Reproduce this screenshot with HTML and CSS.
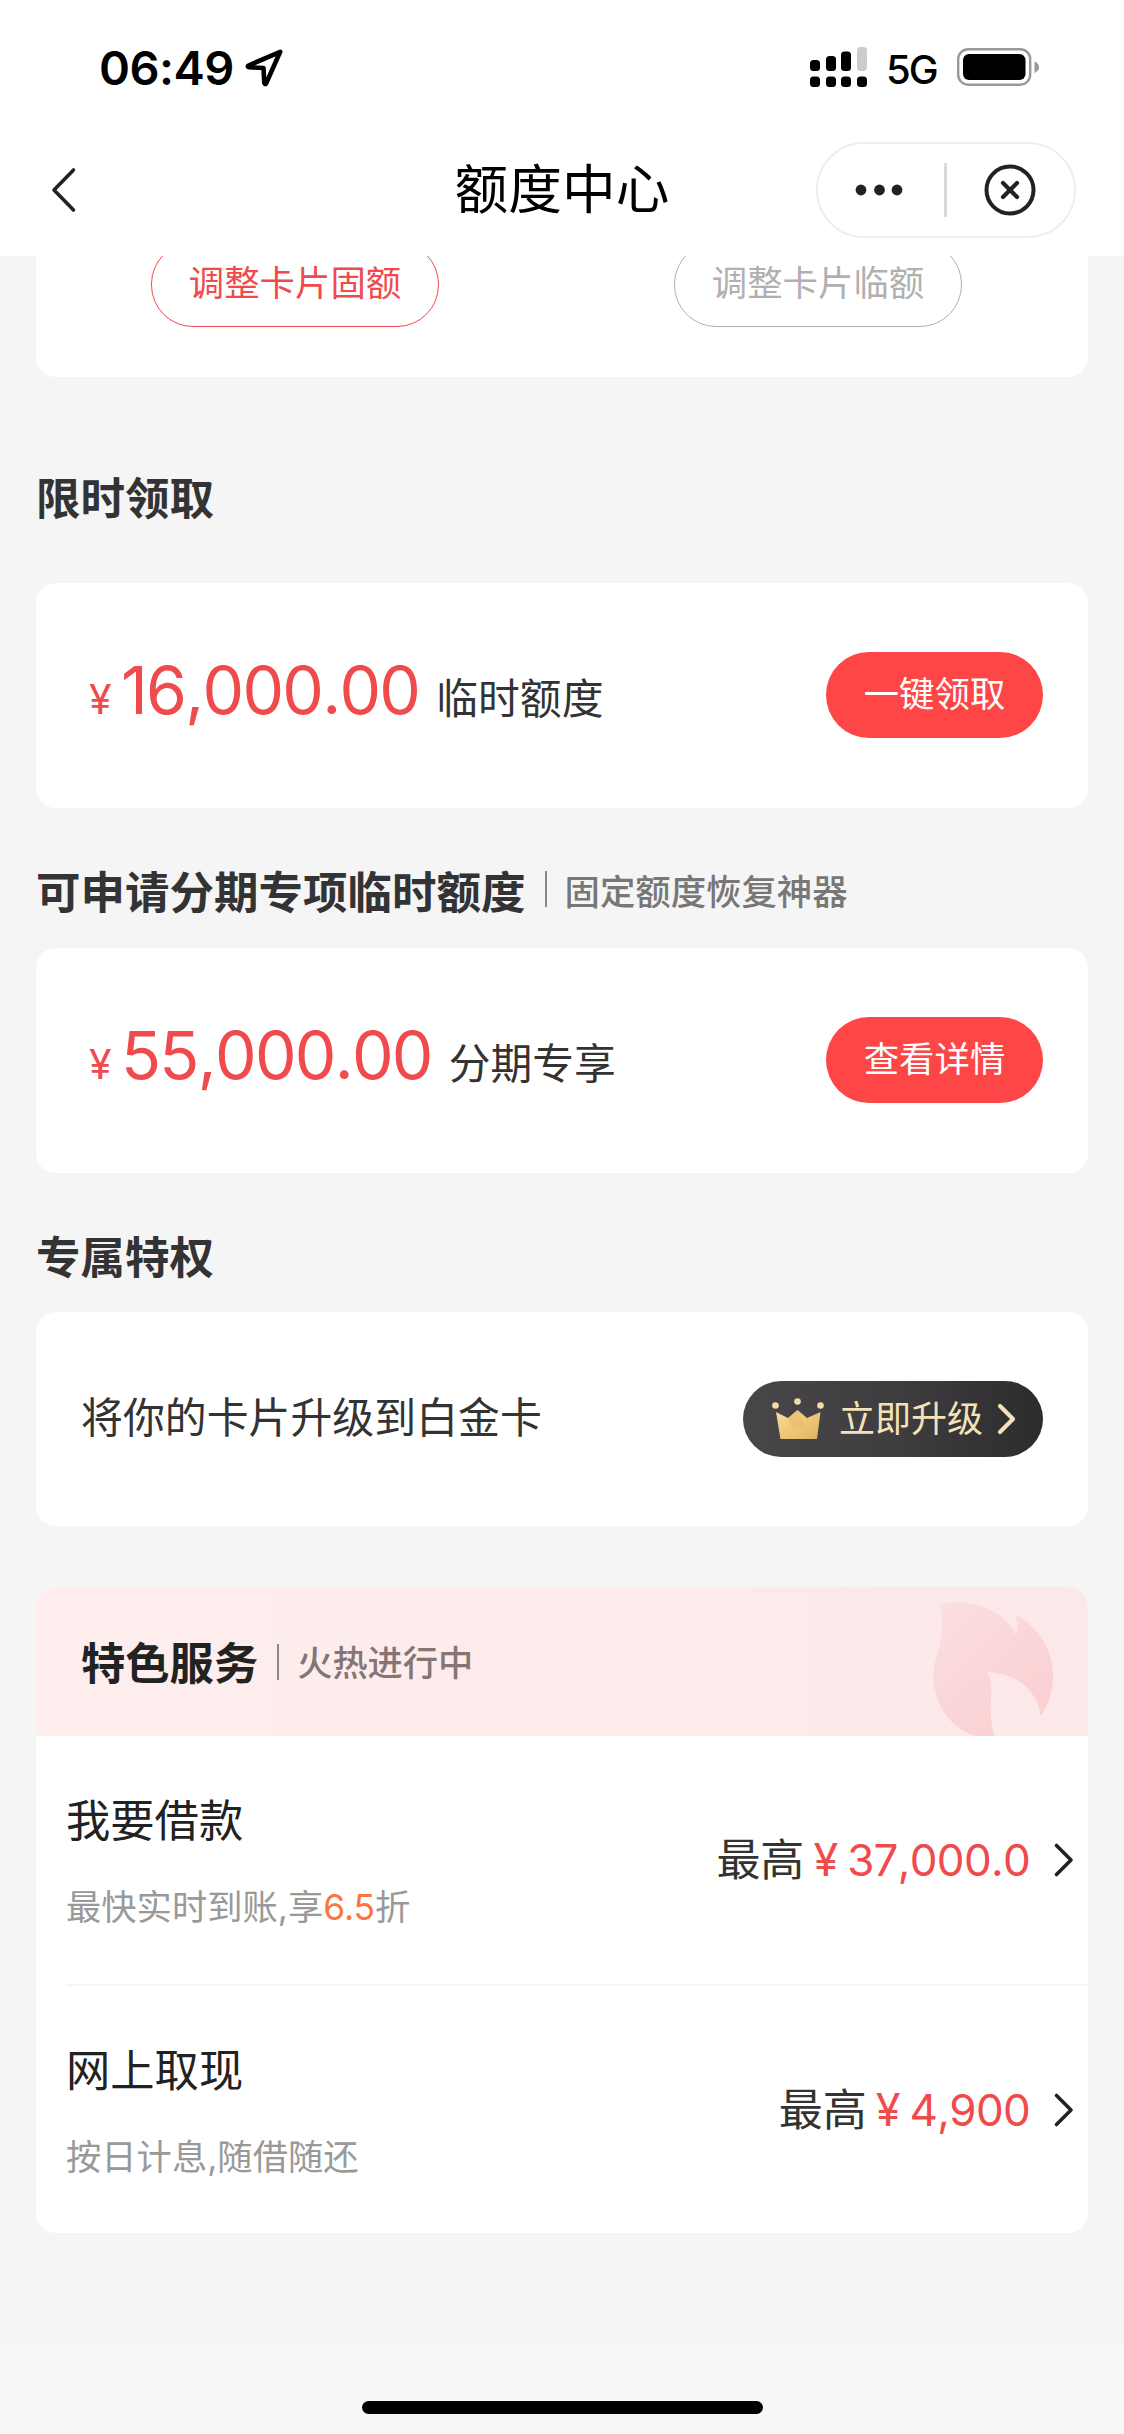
FILE: index.html
```html
<!DOCTYPE html>
<html lang="zh-CN">
<head>
<meta charset="utf-8">
<meta name="viewport" content="width=device-width">
<title>额度中心</title>
<link rel="stylesheet" href="styles.css">
</head>
<body>
<header class="top">
  <div class="status">
    <span class="time">06:49</span>
    <svg class="loc" width="40" height="40" viewBox="0 0 40 40"><path d="M36.200 3.800 L4.500 17.500 Q3 19 5 19.300 L19.500 20 L20.300 35 Q21 37 22.200 35.300 Z" fill="none" stroke="#000" stroke-width="4.600" stroke-linejoin="round"/></svg>
    <div class="status-right">
      <svg class="signal" width="58" height="42" viewBox="0 0 58 42">
        <rect x="0" y="13" width="10" height="11" rx="3.500"/><rect x="16" y="9" width="10" height="15" rx="3.500"/><rect x="31" y="4.500" width="10" height="19.500" rx="3.500"/><rect x="47" y="0" width="10" height="24" rx="3.500" fill="#ccc"/>
        <rect x="0" y="29.500" width="10" height="10.500" rx="3.500"/><rect x="16" y="29.500" width="10" height="10.500" rx="3.500"/><rect x="31" y="29.500" width="10" height="10.500" rx="3.500"/><rect x="47" y="29.500" width="10" height="10.500" rx="3.500"/>
      </svg>
      <span class="net">5G</span>
      <svg class="battery" width="84" height="40" viewBox="0 0 84 40">
        <rect x="1.200" y="1.200" width="72" height="35.500" rx="10" fill="none" stroke="#999" stroke-width="2.400"/>
        <rect x="6" y="6" width="62.500" height="26" rx="6"/>
        <path d="M77.500 13.500 Q82 15.500 82 19.300 Q82 23 77.500 25 Z" fill="#999"/>
      </svg>
    </div>
  </div>
  <nav class="nav">
    <svg class="back" width="28" height="48" viewBox="0 0 28 48"><path d="M23.500 5 L4 25 L23.500 45" fill="none" stroke="#222" stroke-width="3.600" stroke-linecap="round" stroke-linejoin="round"/></svg>
    <h1 class="title">额度中心</h1>
    <div class="capsule">
      <svg width="48" height="12" viewBox="0 0 48 12" fill="#222"><circle cx="6" cy="6" r="5.400"/><circle cx="24.500" cy="6" r="5.400"/><circle cx="42" cy="6" r="5.400"/></svg>
      <i class="capsule-line"></i>
      <svg width="52" height="52" viewBox="0 0 52 52" fill="none" stroke="#222"><circle cx="26" cy="26" r="23.500" stroke-width="4"/><path d="M19 19 L33 33 M33 19 L19 33" stroke-width="4.200" stroke-linecap="round"/></svg>
    </div>
  </nav>
</header>
<main class="page">
  <section class="card adjust">
    <div class="outline red">调整卡片固额</div>
    <div class="outline grey">调整卡片临额</div>
  </section>

  <h2 class="heading first">限时领取</h2>
  <section class="card offer">
    <span class="yen">¥</span><span class="amount">16,000.00</span><span class="label">临时额度</span>
    <span class="btn">一键领取</span>
  </section>

  <h2 class="heading second">可申请分期专项临时额度<i class="bar"></i><small>固定额度恢复神器</small></h2>
  <section class="card offer">
    <span class="yen">¥</span><span class="amount">55,000.00</span><span class="label">分期专享</span>
    <span class="btn">查看详情</span>
  </section>

  <h2 class="heading third">专属特权</h2>
  <section class="card vip">
    <span class="vip-text">将你的卡片升级到白金卡</span>
    <span class="upgrade">
      <svg class="crown" width="52" height="43" viewBox="0 0 52 43">
        <defs><linearGradient id="gold" x1="0" y1="0" x2="1" y2="1"><stop offset="0" stop-color="#f6dfa0"/><stop offset=".5" stop-color="#efc878"/><stop offset="1" stop-color="#dfb35e"/></linearGradient></defs>
        <path d="M4 14 L16 20 L25.500 12 L35 20 L48.500 14 L45 41 L8.500 41 Z" fill="url(#gold)"/>
        <path d="M25.500 12 L33 28 L20 30 L16 20 Z" fill="#e6b660" opacity=".45"/>
        <g fill="#f3dca0"><circle cx="3.500" cy="7.500" r="3.300"/><circle cx="25.500" cy="3.500" r="3.300"/><circle cx="48.500" cy="7.500" r="3.300"/></g>
      </svg>
      <span class="upgrade-text">立即升级</span>
      <svg width="20" height="32" viewBox="0 0 20 32"><path d="M3 3 L16 16 L3 29" fill="none" stroke="#f5e2b8" stroke-width="4.200" stroke-linecap="round" stroke-linejoin="round"/></svg>
    </span>
  </section>

  <section class="card services">
    <div class="banner">
      <span class="banner-title">特色服务</span><i class="bar"></i><span class="banner-sub">火热进行中</span>
      <svg class="flame" width="124" height="138" viewBox="0 0 124 138">
        <defs><linearGradient id="fire" x1="0" y1="0" x2=".8" y2="1"><stop offset="0" stop-color="#fbdfe2"/><stop offset=".5" stop-color="#fad6d9"/><stop offset="1" stop-color="#fbcfd0"/></linearGradient></defs>
        <path d="M8 4 C40 -2 72 10 84 35 Q87 25 83 14 C120 35 133 78 109 116 C105 96 93 74 55 72 C65 87 53 104 63 138 L50 138 C12 130 -4 92 3 63 Q14 27 8 4 Z" fill="url(#fire)"/>
      </svg>
    </div>
    <div class="item">
      <div class="item-main"><div class="item-title">我要借款</div><div class="item-sub">最快实时到账,享<b>6.5</b>折</div></div>
      <div class="item-side"><span>最高</span><em class="sign">¥</em><em class="num">37,000.0</em>
        <svg width="22" height="36" viewBox="0 0 22 36"><path d="M3.500 3.500 L18 18 L3.500 32.500" fill="none" stroke="#222" stroke-width="3.600" stroke-linecap="round" stroke-linejoin="round"/></svg></div>
    </div>
    <div class="item last">
      <div class="item-main"><div class="item-title">网上取现</div><div class="item-sub">按日计息,随借随还</div></div>
      <div class="item-side"><span>最高</span><em class="sign">¥</em><em class="num">4,900</em>
        <svg width="22" height="36" viewBox="0 0 22 36"><path d="M3.500 3.500 L18 18 L3.500 32.500" fill="none" stroke="#222" stroke-width="3.600" stroke-linecap="round" stroke-linejoin="round"/></svg></div>
    </div>
  </section>
</main>
<footer class="bottom"><div class="home"></div></footer>
</body>
</html>
```
FILE: styles.css
```css
* { box-sizing: border-box; }
body {
  margin: 0;
  width: 1124px;
  height: 2434px;
  display: flex;
  flex-direction: column;
  overflow: hidden;
  background: #f5f5f5;
  color: #333;
  font-family: Inter, "Noto Sans CJK SC", sans-serif;
  white-space: nowrap;
}
svg { display: block; flex: none; }
i, em, b { font-style: normal; font-weight: 400; }

.top { height: 256px; background: #fff; flex: none; }
.status { height: 136px; display: flex; align-items: center; padding-left: 99px; color: #000; }
.time { font-size: 47px; font-weight: 600; letter-spacing: -0.500px; width: 145px; line-height: 60px; }
.status-right { margin-left: auto; padding-right: 83px; display: flex; align-items: center; }
.signal { margin-right: 18px; }
.net { width: 71px; font-size: 40px; font-weight: 450; line-height: 50px; letter-spacing: -2px; padding-top: 3px; }

.nav { height: 106px; display: flex; align-items: center; position: relative; padding: 0 48px 0 50px; justify-content: space-between; }
.title { position: absolute; inset: 0; margin: 0; text-align: center; line-height: 107px; font-size: 53.700px; font-weight: 400; color: #000; }
.capsule { width: 260px; height: 96px; border: 2px solid #eee; border-radius: 48px; display: flex; align-items: center; padding: 0 38px 0 37px; justify-content: space-between; margin-top: 1px; }
.capsule-line { width: 3px; height: 54px; background: #d9d9d9; margin-right: 0; margin-left: 4px; }

.page { height: 2087px; padding: 0 36px; flex: none; }
.card { background: #fff; border-radius: 20px; display: flex; }
.adjust { height: 121px; border-radius: 0 0 20px 20px; overflow: hidden; align-items: flex-end; padding: 0 126px 50px 115px; justify-content: space-between; }
.outline { width: 288px; height: 85px; border: 1.500px solid; border-radius: 42px; font-size: 35.400px; line-height: 82px; text-align: center; flex: none; }
.red { color: #f04a4d; }
.grey { color: #b0b0b0; }

.heading { margin: 0; display: flex; align-items: center; font-size: 44.500px; font-weight: 700; color: #333; }
.heading small { font-size: 35.400px; font-weight: 500; color: #777; }
.first { height: 206px; padding-top: 30px; }
.second { height: 141px; padding-top: 23px; }
.third { height: 140px; padding-top: 25px; }
.bar { width: 2px; height: 36px; background: #888; margin: 0 18px 0 19px; }

.offer { height: 225px; align-items: baseline; padding: 72px 45px 0 53px; color: #ef4a4c; }
.offer + .heading { margin-top: -1px; }
.yen { font-size: 41px; font-weight: 400; width: 32px; }
.amount { font-size: 66px; line-height: 70px; font-weight: 370; letter-spacing: -1.750px; font-kerning: none; }
.label { font-size: 41.800px; line-height: 60px; color: #333; margin-left: 17px; }
.btn { margin-left: auto; align-self: flex-start; margin-top: -3px; width: 217px; height: 86px; border-radius: 43px; background: #fd4645; color: #fff; font-size: 35.400px; line-height: 86px; text-align: center; }

.vip { height: 214px; align-items: center; justify-content: space-between; padding: 0 45px 0 45px; }
.vip-text { font-size: 41.900px; line-height: 60px; padding-bottom: 2px; }
.upgrade { width: 300px; height: 76px; border-radius: 38px; background: linear-gradient(90deg, #484649, #3f3d3f 50%, #2d2c2d); display: flex; align-items: center; padding-left: 29px; }
.upgrade-text { color: #f5e2b8; font-size: 36px; line-height: 50px; margin: 0 14px 0 15px; }

.services { margin-top: 61px; height: 646px; flex-direction: column; overflow: hidden; }
.banner { height: 149px; background: linear-gradient(90deg, #feeeee, #fce8e8); display: flex; align-items: center; padding: 0 32px 0 45px; color: #222; flex: none; overflow: hidden; }
.banner-title { font-size: 44.300px; font-weight: 700; margin-top: -1px; }
.banner-sub { font-size: 35.200px; font-weight: 500; color: #857575; margin-top: -2px; }
.flame { margin-left: auto; align-self: flex-end; margin-bottom: -2px; }
.item { height: 250px; margin-left: 30px; display: flex; justify-content: space-between; border-bottom: 2px solid #f5f5f5; padding-right: 13px; flex: none; }
.last { border: 0; height: 247px; }
.item-main { padding-top: 53px; }
.item-title { font-size: 44.300px; line-height: 64px; color: #222; }
.item-sub { font-size: 35.300px; line-height: 50px; margin-top: 30px; color: #999; }
.item-sub b { color: #ff7340; }
.item-side { display: flex; align-items: center; font-size: 44px; line-height: 64px; color: #333; }
.item-side em { color: #ef4a4c; }
.item-side .sign { font-size: 45px; margin: 0 9px; }
.item-side .num { letter-spacing: -0.700px; margin-right: 23px; font-kerning: none; font-weight: 380; }

.bottom { flex: 1; background: #f7f7f7; display: flex; justify-content: center; align-items: flex-end; padding-bottom: 20px; }
.home { width: 401px; height: 13px; border-radius: 7px; background: #000; }
```
